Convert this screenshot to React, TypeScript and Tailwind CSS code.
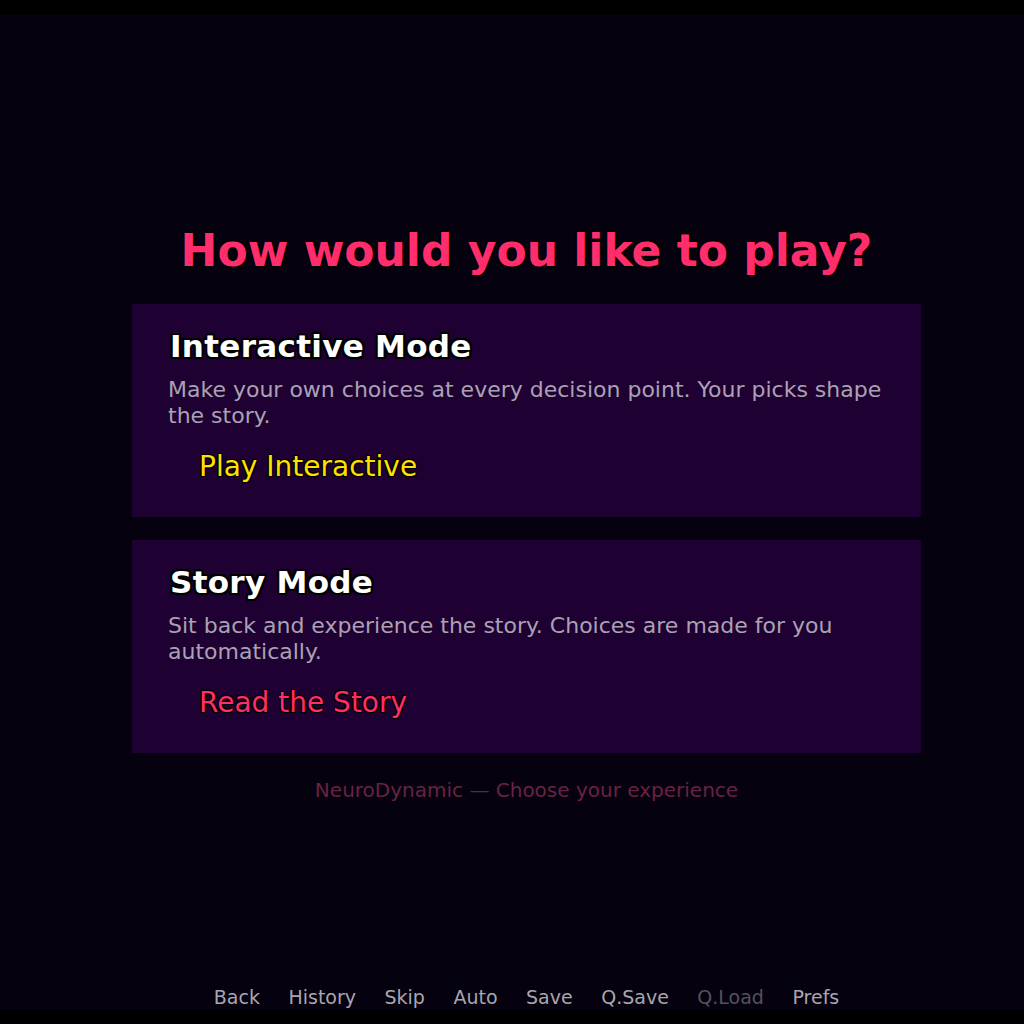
const outline = '[text-shadow:-1px_-1px_0_#000,1px_-1px_0_#000,-1px_1px_0_#000,1px_1px_0_#000,0_0_2px_#000]'
const heavyOutline = '[text-shadow:-2px_-2px_0_#000,2px_-2px_0_#000,-2px_2px_0_#000,2px_2px_0_#000,0_2px_0_#000,0_-2px_0_#000,2px_0_0_#000,-2px_0_0_#000]'

const modes = [
  {
    title: 'Interactive Mode',
    text: 'Make your own choices at every decision point. Your picks shape the story.',
    action: 'Play Interactive',
    color: 'text-[#ffe100]',
  },
  {
    title: 'Story Mode',
    text: 'Sit back and experience the story. Choices are made for you automatically.',
    action: 'Read the Story',
    color: 'text-[#ff2e66]',
  },
]

const quickMenu = ['Back', 'History', 'Skip', 'Auto', 'Save', 'Q.Save', 'Q.Load', 'Prefs']

export default function App() {
  return (
    <div className="h-screen flex flex-col bg-black font-['DejaVu_Sans',sans-serif]">
      <div className="h-[15px] bg-black" />

      <main className="flex-1 flex flex-col bg-[#05010f]">
        <div className="ml-[132px] w-[789px] pt-[208px] flex flex-col">
          <h1 className={`text-center text-[44px] leading-[56px] font-bold text-[#ff2d6b] ${outline}`}>
            How would you like to play?
          </h1>

          <div className="mt-[25px] flex flex-col gap-[23px]">
            {modes.map((mode) => (
              <div key={mode.title} className="h-[213px] bg-[#1f0033] pl-[36px] pr-[36px] pt-[24px]">
                <h2 className={`pl-[2px] text-[31px] leading-[36px] tracking-[0.3px] font-bold text-white ${heavyOutline}`}>
                  {mode.title}
                </h2>
                <p className="mt-[13px] text-[22px] leading-[26px] text-[#aaa2b2]">{mode.text}</p>
                <button className={`mt-[22px] ml-[31px] text-[28px] leading-[32px] ${mode.color} ${outline}`}>
                  {mode.action}
                </button>
              </div>
            ))}
          </div>

          <p className="mt-[25px] text-center text-[20px] leading-[24px] text-[#6a2243]">
            NeuroDynamic — Choose your experience
          </p>
        </div>

        {/* quick menu */}
        <div className="mt-auto ml-[132px] w-[789px] flex justify-center gap-[28.5px]">
          {quickMenu.map((item) => (
            <span
              key={item}
              className={`text-[19px] leading-[24px] ${item === 'Q.Load' ? 'text-[#55515c]' : 'text-[#a9a6ae]'}`}
            >
              {item}
            </span>
          ))}
        </div>
      </main>

      <div className="h-[15px] bg-black" />
    </div>
  )
}
